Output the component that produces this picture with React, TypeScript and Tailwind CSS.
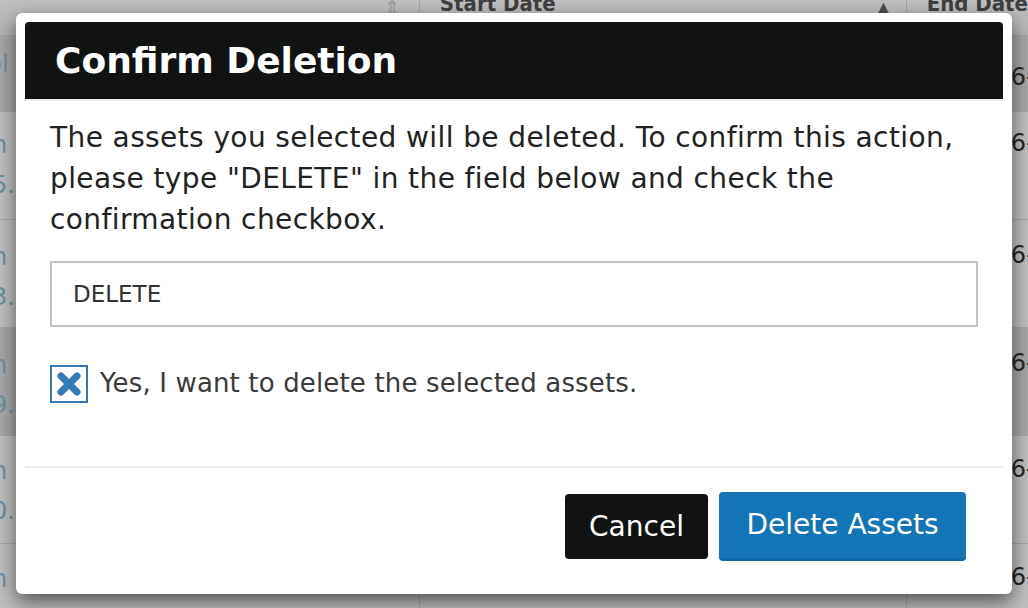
import React from "react";

const rows = [
  { a: "Tool", a2: "", b: "2016-", dark: true, h: "h-[76px]", pt: "pt-[8px]", bpt: "pt-[21px]", shift: "-ml-[38px]" },
  { a: "n", a2: "5.", b: "2016-", dark: false, h: "h-[108px]", pt: "pt-[13px]", bpt: "pt-[11px]", shift: "-ml-[8px]" },
  { a: "n", a2: "3.", b: "2016-", dark: false, h: "h-[108px]", pt: "pt-[17px]", bpt: "pt-[15px]", shift: "-ml-[8px]" },
  { a: "n", a2: "9.", b: "2016-", dark: true, h: "h-[108px]", pt: "pt-[17px]", bpt: "pt-[15px]", shift: "-ml-[8px]" },
  { a: "n", a2: "0.", b: "2016-", dark: false, h: "h-[108px]", pt: "pt-[15px]", bpt: "pt-[13px]", shift: "-ml-[8px]" },
  { a: "n", a2: "", b: "2016-", dark: false, h: "h-[108px]", pt: "pt-[15px]", bpt: "pt-[13px]", shift: "-ml-[8px]" },
];

export default function App() {
  return (
    <div className="relative w-[1028px] h-[608px] overflow-hidden bg-white" style={{ fontFamily: '"DejaVu Sans", Verdana, sans-serif' }}>
      {/* background table */}
      <div className="flex flex-col w-full">
        <div className="flex h-[36px] overflow-hidden bg-gradient-to-b from-[#ffffff] to-[#f2f2f2] border-b border-[#dcdcdc]">
          <div className="w-[420px] border-r border-[#ddd] flex items-start justify-end pr-[18px] text-[#cfcfcf] text-[20px] leading-none -mt-[2px]">⇕</div>
          <div className="w-[487px] border-r border-[#ddd] flex items-start justify-between pl-[20px] pr-[16px]">
            <span className="text-[#555] font-bold text-[22px] leading-[20px] -mt-[6px]" style={{ fontFamily: '"DejaVu Sans Condensed", "DejaVu Sans", sans-serif' }}>Start Date</span>
            <span className="text-[#666] text-[16px] leading-[20px] -mt-[2px]">▲</span>
          </div>
          <div className="flex-1 pl-[20px] whitespace-nowrap">
            <span className="text-[#555] font-bold text-[22px] leading-[20px] -mt-[6px] block" style={{ fontFamily: '"DejaVu Sans Condensed", "DejaVu Sans", sans-serif' }}>End Date</span>
          </div>
        </div>
        {rows.map((r, i) => (
          <div key={i} className={`flex ${r.h} border-b border-[#e2e2e2] ${r.dark ? "bg-[#e0e0e0]" : "bg-white"}`}>
            <div className={`w-[420px] border-r border-[#ddd] overflow-hidden ${r.pt}`}>
              <div className={`${r.shift} text-[#8cc2de] text-[24px] leading-[40px]`}>
                <div>{r.a}</div>
                <div>{r.a2}</div>
              </div>
            </div>
            <div className="w-[487px] border-r border-[#ddd]"></div>
            <div className={`flex-1 pl-[58px] ${r.bpt} text-[#333] text-[24px] leading-[40px] whitespace-nowrap overflow-hidden`}>{r.b}</div>
          </div>
        ))}
      </div>

      {/* overlay */}
      <div className="absolute inset-0 bg-black/25"></div>

      {/* dialog */}
      <div className="absolute left-[16px] top-[13px] w-[996px] h-[581px] bg-white rounded-[6px] shadow-[0_8px_20px_rgba(0,0,0,0.55)] flex flex-col p-[9px]">
        <div className="h-[77px] bg-[#111212] rounded-t-[4px] flex items-center pl-[30px] border-b-[2px] border-[#eee] box-content">
          <h1 className="text-white font-bold text-[36px] leading-none">
            Confirm Deletion
          </h1>
        </div>
        <div className="flex flex-col px-[25px] pt-[16px]">
          <p className="text-[#222] text-[28px] leading-[41px] tracking-[0.4px]">
            The assets you selected will be deleted. To confirm this action, please type "DELETE" in the field below and check the confirmation checkbox.
          </p>
          <div className="mt-[21px] h-[66px] border-[2px] border-[#c4c4c4] flex items-center pl-[21px] text-[#333] text-[23px]">
            DELETE
          </div>
          <div className="mt-[37px] flex items-center gap-[12px]">
            <div className="w-[38px] h-[38px] border-[2px] border-[#337ab7] flex items-center justify-center">
              <svg width="26" height="26" viewBox="0 0 26 26">
                <path d="M5 5 L21 21 M21 5 L5 21" stroke="#337ab7" strokeWidth="7" strokeLinecap="round" />
              </svg>
            </div>
            <span className="text-[#3a3a3a] text-[26px] tracking-[0.15px]">Yes, I want to delete the selected assets.</span>
          </div>
        </div>
        <div className="mt-auto border-t-[2px] border-[#eee] h-[119px] flex items-center justify-end gap-[11px] pr-[37px]">
          <button className="h-[65px] w-[143px] bg-[#111212] text-white rounded-[4px] text-[28px]">
            Cancel
          </button>
          <button className="h-[69px] w-[247px] bg-[#1474b8] text-white rounded-[4px] text-[28px] border-b-[3px] border-[#0f68a8]">
            Delete Assets
          </button>
        </div>
      </div>
    </div>
  );
}
